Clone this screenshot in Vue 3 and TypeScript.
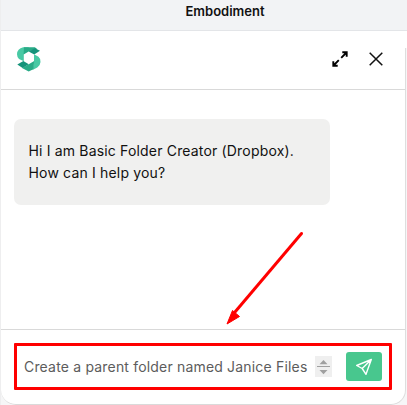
<script setup lang="ts">
import { ref } from 'vue'

const title = 'Embodiment'
const greeting: string[] = ['Hi I am Basic Folder Creator (Dropbox).', 'How can I help you?']
const draft = ref<string>('Create a parent folder named Janice Files')
</script>

<template>
  <main class="page">
    <div class="topbar"><h1 class="title">{{ title }}</h1></div>
    <section class="chat">
      <header class="head">
        <svg class="logo" width="24" height="25" viewBox="0 0 24 25" aria-hidden="true">
          <path fill="#48c9a4" d="M6.2 .2H12L6.8 7.2V14.2L2 12Q0 10 0 7.2Q.2 1.5 6.2 .2Z" />
          <path fill="#29ab87" d="M7 .2H17.8L20 1.7L11.7 4.4L6.6 7.4Z" />
          <path fill="#15937a" d="M11.7 4.4L18 1.2L23 3.7L17.2 7.4Z" />
          <path fill="#48c9a4" d="M17 7.3L21.5 9.8Q23.6 11.5 23.5 15Q23.3 18.5 20.3 20.5L15.5 23L17 14Z" />
          <path fill="#29ab87" d="M6 20.5L11.7 17.2L17.2 13.9L16.3 22.2L11.7 24.6L5 21Z" />
          <path fill="#15937a" d="M.3 17.4L6.4 14L11.7 17.2L5.6 21Z" />
        </svg>
        <div class="actions">
          <svg width="16" height="16" viewBox="0 0 16 16" fill="none" stroke="#000" stroke-width="1.9" aria-hidden="true">
            <path d="M9.2 6.8L14.5 1.5M10.3 1.3H14.7V5.7M6.8 9.2L1.5 14.5M1.3 10.3V14.7H5.7" />
          </svg>
          <svg width="14" height="14" viewBox="0 0 14 14" fill="none" stroke="#111" stroke-width="1.5" aria-hidden="true">
            <path d="M.7 .7L13.3 13.3M13.3 .7L.7 13.3" />
          </svg>
        </div>
      </header>
      <div class="messages">
        <div class="bubble">
          <p v-for="line in greeting" :key="line">{{ line }}</p>
        </div>
      </div>
      <footer class="foot">
        <div class="composer">
          <span class="draft">{{ draft }}</span>
          <span class="stepper">
            <svg width="17" height="21" viewBox="0 0 17 21" aria-hidden="true">
              <path fill="#a0a0a0" d="M4.5 8.2L8.5 4L12.5 8.2ZM4.5 14L8.5 18.2L12.5 14Z" />
              <path fill="#a0a0a0" d="M2 10H15V11H2Z" />
            </svg>
          </span>
          <button class="send" aria-label="Send">
            <svg width="18" height="18" viewBox="0 0 18 18" fill="none" stroke="#fff" stroke-width="1.4" stroke-linejoin="round" aria-hidden="true">
              <path d="M16.3 1.5L1.7 7.5L7.2 10.5L11 16.3ZM16.3 1.5L7.2 10.5" />
            </svg>
          </button>
        </div>
      </footer>
    </section>
    <span class="edge-cap"></span>
    <svg class="pointer" width="82" height="98" viewBox="0 0 82 98" aria-hidden="true">
      <path d="M76.5 3.5L10 82" stroke="#f00" stroke-width="3" stroke-linecap="round" />
      <path d="M2 94L7.5 80.5L14.5 86.5Z" fill="#f00" stroke="#f00" stroke-width="1" />
    </svg>
  </main>
</template>

<style>
body { margin: 0; overflow: hidden; }
</style>

<style scoped>
.page {
  position: relative;
  width: 407px;
  height: 405px;
  overflow: hidden;
  background: #f6f6f7;
  font-family: Inter, "Liberation Sans", sans-serif;
  border-left: 1px solid #eeeeef;
  box-sizing: border-box;
}
.topbar {
  box-sizing: border-box;
  height: 31px;
  background: #f2f3f5;
  border-bottom: 1px solid #e3e5e8;
  padding: 3px 0 0 42px;
  text-align: center;
}
.title { margin: 0; font-size: 13px; line-height: 17px; font-weight: 600; color: #111; }
.chat {
  box-sizing: border-box;
  width: 405px;
  height: 374px;
  display: flex;
  flex-direction: column;
  background: #fff;
  border-right: 1px solid #dedede;
  border-bottom: 1px solid #dadada;
  border-radius: 0 0 15px 15px;
}
.edge-cap { position: absolute; right: 0; top: 31px; width: 2px; height: 17px; background: #fff; }
.head {
  box-sizing: border-box;
  height: 59px;
  border-bottom: 1px solid #d9d9d9;
  display: flex;
  align-items: center;
  justify-content: space-between;
  padding: 0 22px 1px 16px;
}
.actions { display: flex; align-items: center; gap: 21px; padding-bottom: 2px; }
.messages { flex: 1; padding: 29px 13px; }
.bubble {
  box-sizing: border-box;
  width: 316px;
  height: 86px;
  padding: 21px 14px 21px 14.5px;
  border-radius: 7px;
  background: #f0f0ef;
}
.bubble p { margin: 0; font-size: 14px; line-height: 22px; letter-spacing: 0.17px; color: #111; white-space: nowrap; }
.foot { box-sizing: border-box; height: 75px; border-top: 1px solid #d9d9d9; padding: 13px; }
.composer {
  box-sizing: border-box;
  width: 378px;
  height: 47px;
  border: 3px solid #f00;
  border-radius: 1px;
  padding: 0 7px;
  display: flex;
  align-items: center;
}
.draft { width: 291px; font-size: 14px; line-height: 22px; letter-spacing: 0.18px; color: #5c5c5c; white-space: nowrap; }
.stepper { width: 17px; height: 21px; background: #efefef; display: flex; }
.send {
  width: 36px;
  height: 29px;
  margin-left: 14px;
  padding: 0;
  border: 0;
  border-radius: 3px;
  background: #48c78e;
  display: grid;
  place-items: center;
}
.pointer { position: absolute; left: 224px; top: 230px; }
</style>
